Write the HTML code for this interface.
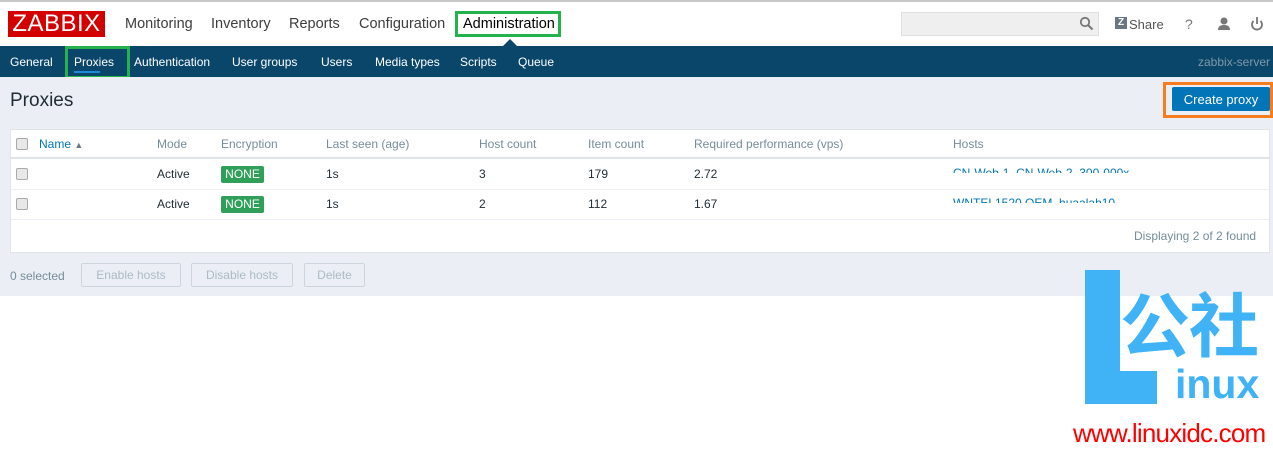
<!DOCTYPE html>
<html><head><meta charset="utf-8"><style>
*{margin:0;padding:0;box-sizing:border-box}
body{width:1273px;height:460px;overflow:hidden;background:#fff;font-family:"Liberation Sans",Arial,sans-serif;position:relative;font-size:12px;color:#1f2c33}
.a{position:absolute;white-space:nowrap}
#top{position:absolute;left:0;top:0;width:1273px;height:46px;border-top:2px solid #c8c8c8;background:#fff}
#nav{position:absolute;left:0;top:46px;width:1273px;height:31px;background:#0a466a}
#page{position:absolute;left:0;top:77px;width:1273px;height:219px;background:#ebeef5}
.m{font-size:14.5px;color:#3d3d3d;top:16px}
.s{font-size:12px;color:#fff;top:55px}
.th{font-size:12px;color:#768d99;top:137px}
.td{font-size:12px;color:#1f2c33}
.cb{position:absolute;width:12px;height:12px;border:1px solid #aaa;border-radius:2px;background:#e8e8e8}
.none{position:absolute;left:221px;width:43px;height:17px;background:#2f9f5a;border-radius:2px;color:#fff;font-size:12px;line-height:17px;text-align:center}
.btn{position:absolute;top:263px;height:24px;border:1px solid #ccd5dc;color:#acbbc4;font-size:12px;line-height:22px;text-align:center;border-radius:2px}
</style></head><body>
<div id="top"></div>
<div class="a" style="left:8px;top:11px;width:97px;height:26px;background:#d40000;color:#fff;font-size:24px;line-height:26px;text-align:center;letter-spacing:0.5px">ZABBIX</div>
<div class="a m" style="left:125px">Monitoring</div>
<div class="a m" style="left:211px">Inventory</div>
<div class="a m" style="left:289px">Reports</div>
<div class="a m" style="left:359px">Configuration</div>
<div class="a" style="left:455px;top:11px;width:106px;height:26px;border:3px solid #23b24c"></div>
<div class="a m" style="left:463px;color:#000">Administration</div>
<div class="a" style="left:503px;top:39px;width:0;height:0;border-left:7px solid transparent;border-right:7px solid transparent;border-bottom:7px solid #0a466a"></div>
<div class="a" style="left:901px;top:12px;width:198px;height:24px;background:#efefef;border:1px solid #e0e0e0"></div>
<svg class="a" style="left:1079px;top:16px" width="16" height="16" viewBox="0 0 16 16"><circle cx="6" cy="6" r="4.2" fill="none" stroke="#777" stroke-width="1.8"/><path d="M9 9l4.5 4.5" stroke="#777" stroke-width="2"/></svg>
<div class="a" style="left:1115px;top:17px;width:12px;height:12px;background:#6b7780;color:#fff;font-size:10px;font-weight:bold;line-height:12px;text-align:center">Z</div>
<div class="a" style="left:1129px;top:17px;font-size:13px;color:#555">Share</div>
<div class="a" style="left:1185px;top:16px;font-size:14px;color:#777">?</div>
<svg class="a" style="left:1216px;top:16px" width="16" height="16" viewBox="0 0 16 16"><circle cx="8" cy="5" r="3.5" fill="#777"/><path d="M2 14c0-4 3-5 6-5s6 1 6 5z" fill="#777"/></svg>
<svg class="a" style="left:1250px;top:16px" width="14" height="16" viewBox="0 0 14 16"><path d="M3.5 5a5 5 0 1 0 7 0" fill="none" stroke="#777" stroke-width="1.8"/><path d="M7 1v7" stroke="#777" stroke-width="1.8"/></svg>
<div id="nav"></div>
<div class="a s" style="left:10px">General</div>
<div class="a" style="left:65px;top:46px;width:65px;height:33px;border:3px solid #23b24c"></div>
<div class="a s" style="left:74px">Proxies</div>
<div class="a" style="left:74px;top:71px;width:26px;height:2px;background:#1a8ad9"></div>
<div class="a s" style="left:134px">Authentication</div>
<div class="a s" style="left:232px">User groups</div>
<div class="a s" style="left:321px">Users</div>
<div class="a s" style="left:375px">Media types</div>
<div class="a s" style="left:460px">Scripts</div>
<div class="a s" style="left:518px">Queue</div>
<div class="a s" style="left:1198px;color:#7f98a8">zabbix-server</div>
<div id="page"></div>
<div class="a" style="left:10px;top:90px;font-size:19px;color:#1f2c33">Proxies</div>
<div class="a" style="left:1163px;top:82px;width:110px;height:36px;border:3px solid #f57d20"></div>
<div class="a" style="left:1172px;top:87px;width:98px;height:24px;background:#0275b8;color:#fff;font-size:13px;line-height:25px;text-align:center;border-radius:2px">Create proxy</div>
<div class="a" style="left:10px;top:129px;width:1260px;height:124px;background:#fff;border:1px solid #dfe4e7"></div>
<div class="a" style="left:11px;top:157px;width:1258px;height:2px;background:#dfe4e7"></div>
<div class="a" style="left:11px;top:189px;width:1258px;height:1px;background:#ebeef5"></div>
<div class="a" style="left:11px;top:219px;width:1258px;height:1px;background:#ebeef5"></div>
<div class="cb" style="left:16px;top:138px"></div>
<div class="cb" style="left:16px;top:168px"></div>
<div class="cb" style="left:16px;top:198px"></div>
<div class="a th" style="left:39px;color:#0275b8">Name <span style="font-size:9px;color:#6a7a85">▲</span></div>
<div class="a th" style="left:157px">Mode</div>
<div class="a th" style="left:221px">Encryption</div>
<div class="a th" style="left:326px">Last seen (age)</div>
<div class="a th" style="left:479px">Host count</div>
<div class="a th" style="left:588px">Item count</div>
<div class="a th" style="left:694px">Required performance (vps)</div>
<div class="a th" style="left:953px">Hosts</div>
<div class="a td" style="left:157px;top:167px">Active</div>
<div class="none" style="top:166px">NONE</div>
<div class="a td" style="left:326px;top:167px">1s</div>
<div class="a td" style="left:479px;top:167px">3</div>
<div class="a td" style="left:588px;top:167px">179</div>
<div class="a td" style="left:694px;top:167px">2.72</div>
<div class="a" style="left:953px;top:166px;height:7px;overflow:hidden;color:#0275b8;font-size:12px">CN-Web-1, CN-Web-2, 300-000x</div>
<div class="a td" style="left:157px;top:197px">Active</div>
<div class="none" style="top:196px">NONE</div>
<div class="a td" style="left:326px;top:197px">1s</div>
<div class="a td" style="left:479px;top:197px">2</div>
<div class="a td" style="left:588px;top:197px">112</div>
<div class="a td" style="left:694px;top:197px">1.67</div>
<div class="a" style="left:953px;top:196px;height:7px;overflow:hidden;color:#0275b8;font-size:12px">WNTEL1520 OEM, huaalah10</div>
<div class="a" style="left:1134px;top:229px;color:#768d99;font-size:12px">Displaying 2 of 2 found</div>
<div class="a" style="left:10px;top:269px;color:#768d99;font-size:12px">0 selected</div>
<div class="btn" style="left:81px;width:100px">Enable hosts</div>
<div class="btn" style="left:191px;width:102px">Disable hosts</div>
<div class="btn" style="left:304px;width:61px">Delete</div>
<div class="a" style="left:1085px;top:270px;width:35px;height:134px;background:#3fb3f6"></div>
<div class="a" style="left:1085px;top:371px;width:72px;height:33px;background:#3fb3f6"></div>
<div class="a" style="left:1120px;top:282px;font-size:70px;font-weight:bold;color:#3fb3f6;font-family:'Noto Sans CJK SC',sans-serif;line-height:80px;letter-spacing:-1px">公社</div>
<div class="a" style="left:1175px;top:362px;font-size:41px;font-weight:bold;color:#3fb3f6;line-height:45px">inux</div>
<div class="a" style="left:1073px;top:418px;font-size:26px;color:#f00;line-height:30px;letter-spacing:-0.8px">www.linuxidc.com</div>
</body></html>
